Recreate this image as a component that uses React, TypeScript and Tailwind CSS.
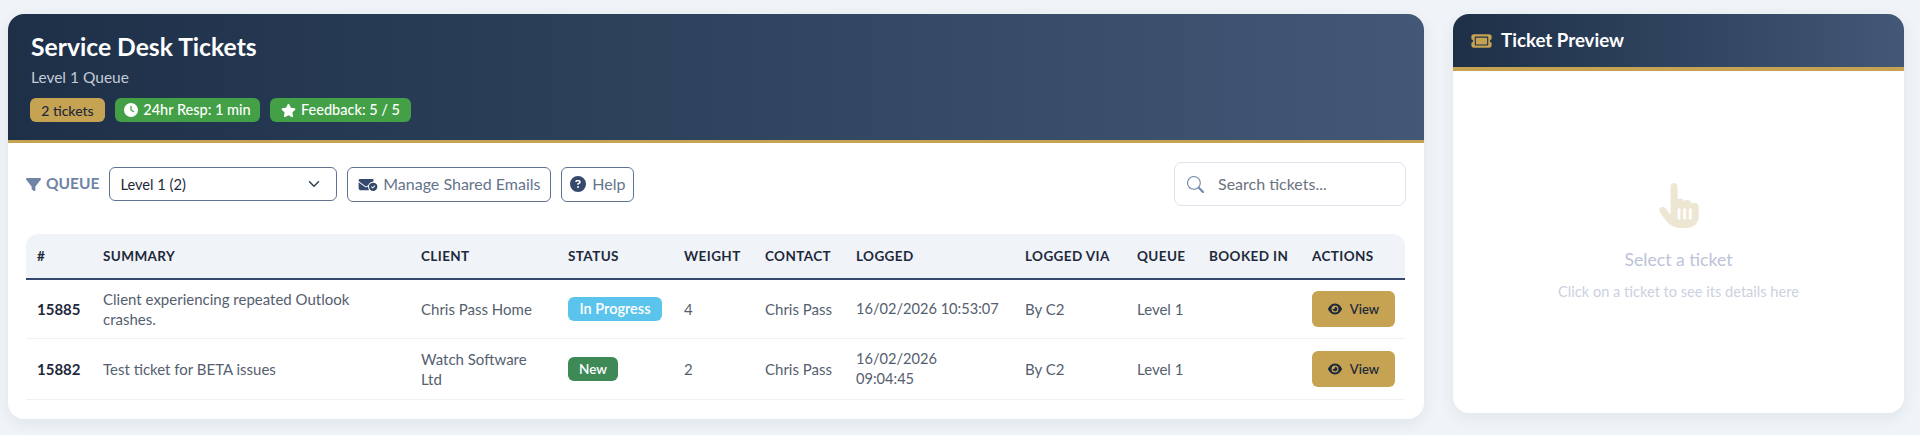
import { ChevronDown } from 'lucide-react';
import { BsSearch } from 'react-icons/bs';
import {
  FaCircleQuestion,
  FaClock,
  FaEnvelopeCircleCheck,
  FaEye,
  FaFilter,
  FaHandPointer,
  FaStar,
  FaTicket,
} from 'react-icons/fa6';

const columns = [
  { label: '#', width: 'w-[66px]' },
  { label: 'Summary', width: 'w-[318px]' },
  { label: 'Client', width: 'w-[147px]' },
  { label: 'Status', width: 'w-[116px]' },
  { label: 'Weight', width: 'w-[81px]' },
  { label: 'Contact', width: 'w-[91px]' },
  { label: 'Logged', width: 'w-[169px]' },
  { label: 'Logged Via', width: 'w-[112px]' },
  { label: 'Queue', width: 'w-[72px]' },
  { label: 'Booked In', width: 'w-[103px]' },
  { label: 'Actions', width: 'w-[104px]' },
];

function ViewButton() {
  return (
    <button className="flex h-9 w-[83px] items-center justify-center gap-2 rounded-md bg-[#c5a352] text-[13px] font-semibold text-[#1e293b]">
      <FaEye className="h-[14px] w-[14px]" />
      View
    </button>
  );
}

export default function App() {
  return (
    <div className="flex h-[435px] items-start gap-[29px] overflow-hidden bg-[#f0f4f8] pt-[14px] pl-2 font-['Lato',sans-serif]">
      <main className="w-[1416px] overflow-hidden rounded-2xl bg-white shadow-[0_4px_16px_rgba(30,48,72,0.08)]">
        <header className="h-[129px] border-b-[3px] border-[#c5a352] bg-gradient-to-r from-[#1e3048] to-[#425876] px-[23px] pt-[17px]">
          <h1 className="text-[24.7px] leading-8 font-bold text-white">Service Desk Tickets</h1>
          <p className="mt-1 text-[15.5px] leading-5 text-[#c3cbd6]">Level 1 Queue</p>
          <div className="mt-[11px] -ml-px flex gap-[10px] font-medium">
            <span className="flex h-6 w-[75px] items-center justify-center rounded-md bg-[#c5a352] text-[14px] text-[#1e293b]">2 tickets</span>
            <span className="flex h-6 w-[145px] items-center justify-center gap-[5px] rounded-md bg-[#43a047] text-[14.5px] text-white">
              <FaClock className="h-[14px] w-[14px]" />
              24hr Resp: 1 min
            </span>
            <span className="flex h-6 w-[141px] items-center justify-center gap-[5px] rounded-md bg-[#43a047] text-[14.5px] text-white">
              <FaStar className="h-[15px] w-[15px]" />
              Feedback: 5 / 5
            </span>
          </div>
        </header>

        <div className="px-[18px] pt-[19px] pb-[19px]">
          <div className="flex h-11 items-center">
            <FaFilter className="h-[15px] w-[15px] text-[#6f84a5]" />
            <span className="ml-[5px] text-[15.5px] font-bold text-[#6f84a5]">QUEUE</span>
            <div className="relative ml-[10px]">
              <select className="h-[34px] w-[228px] appearance-none rounded-md border border-[#5f7391] bg-white pl-[10px] text-[14.7px] text-[#1e293b]">
                <option>Level 1 (2)</option>
              </select>
              <ChevronDown className="pointer-events-none absolute top-[8px] right-[14px] h-[18px] w-[18px] text-[#334155]" />
            </div>
            <button className="ml-[10px] flex h-[35px] w-[204px] items-center justify-center gap-[5px] rounded-md border border-[#5f7391] bg-white text-base text-[#64748b]">
              <FaEnvelopeCircleCheck className="h-[15px] w-[20px] text-[#34496b]" />
              Manage Shared Emails
            </button>
            <button className="ml-[10px] flex h-[35px] w-[73px] items-center justify-center gap-[6px] rounded-md border border-[#5f7391] bg-white text-base text-[#64748b]">
              <FaCircleQuestion className="h-[16px] w-[16px] text-[#34496b]" />
              Help
            </button>
            <label className="ml-auto flex h-11 w-[232px] items-center gap-[14px] rounded-lg border border-[#dde3ec] bg-white pl-3">
              <BsSearch className="h-[17px] w-[17px] shrink-0 text-[#7187ad]" />
              <input placeholder="Search tickets..." className="w-full text-base outline-none placeholder:text-[#6b7280]" />
            </label>
          </div>

          <table className="mt-[28px] w-[1379px] table-fixed border-separate border-spacing-0 text-[15px] text-[#55606f]">
            <colgroup>
              {columns.map((c) => (
                <col key={c.label} className={c.width} />
              ))}
            </colgroup>
            <thead>
              <tr className="text-left text-[13.5px] tracking-[0.4px] text-[#1e293b] uppercase">
                {columns.map((c, i) => (
                  <th
                    key={c.label}
                    className={`h-[46px] border-b-2 border-[#34496b] bg-[#f0f4f8] px-[11px] font-bold ${
                      i === 0 ? 'rounded-tl-xl' : i === columns.length - 1 ? 'rounded-tr-xl' : ''
                    }`}
                  >
                    {c.label}
                  </th>
                ))}
              </tr>
            </thead>
            <tbody className="leading-[20px]">
              <tr className="h-[59px] [&>td]:border-b [&>td]:border-[#eef1f5] [&>td]:px-[11px]">
                <td className="text-[15px] font-bold text-[#1e293b]">15885</td>
                <td>
                  Client experiencing repeated Outlook
                  <br />
                  crashes.
                </td>
                <td>Chris Pass Home</td>
                <td>
                  <span className="inline-flex h-6 w-[94px] items-center justify-center rounded-md bg-[#5bc4ec] text-[14.5px] font-semibold text-white">In Progress</span>
                </td>
                <td>4</td>
                <td>Chris Pass</td>
                <td className="text-[14.6px]">16/02/2026 10:53:07</td>
                <td>By C2</td>
                <td>Level 1</td>
                <td></td>
                <td>
                  <ViewButton />
                </td>
              </tr>
              <tr className="h-[61px] [&>td]:border-b [&>td]:border-[#eef1f5] [&>td]:px-[11px]">
                <td className="text-[15px] font-bold text-[#1e293b]">15882</td>
                <td>Test ticket for BETA issues</td>
                <td>
                  Watch Software
                  <br />
                  Ltd
                </td>
                <td>
                  <span className="inline-flex h-6 w-[50px] items-center justify-center rounded-md bg-[#3e8a57] text-[13.5px] font-semibold text-white">New</span>
                </td>
                <td>2</td>
                <td>Chris Pass</td>
                <td className="text-[14.6px]">
                  16/02/2026
                  <br />
                  09:04:45
                </td>
                <td>By C2</td>
                <td>Level 1</td>
                <td></td>
                <td>
                  <ViewButton />
                </td>
              </tr>
            </tbody>
          </table>
        </div>
      </main>

      <aside className="h-[399px] w-[451px] overflow-hidden rounded-2xl bg-white shadow-[0_4px_16px_rgba(30,48,72,0.08)]">
        <header className="flex h-[57px] items-center gap-[9px] border-b-[4px] border-[#c5a352] bg-gradient-to-r from-[#1e3048] to-[#425876] px-[18px]">
          <FaTicket className="h-[18px] w-[21px] text-[#c5a352]" />
          <h2 className="text-[18.7px] font-bold text-white">Ticket Preview</h2>
        </header>
        <div className="flex flex-col items-center pt-[112px]">
          <FaHandPointer className="h-[45px] w-[40px] text-[#ede6d3]" />
          <p className="mt-[22px] text-[17.6px] leading-5 text-[#bcc3d8]">Select a ticket</p>
          <p className="mt-3 text-[14.6px] leading-5 text-[#ccd1e0]">Click on a ticket to see its details here</p>
        </div>
      </aside>
    </div>
  );
}
